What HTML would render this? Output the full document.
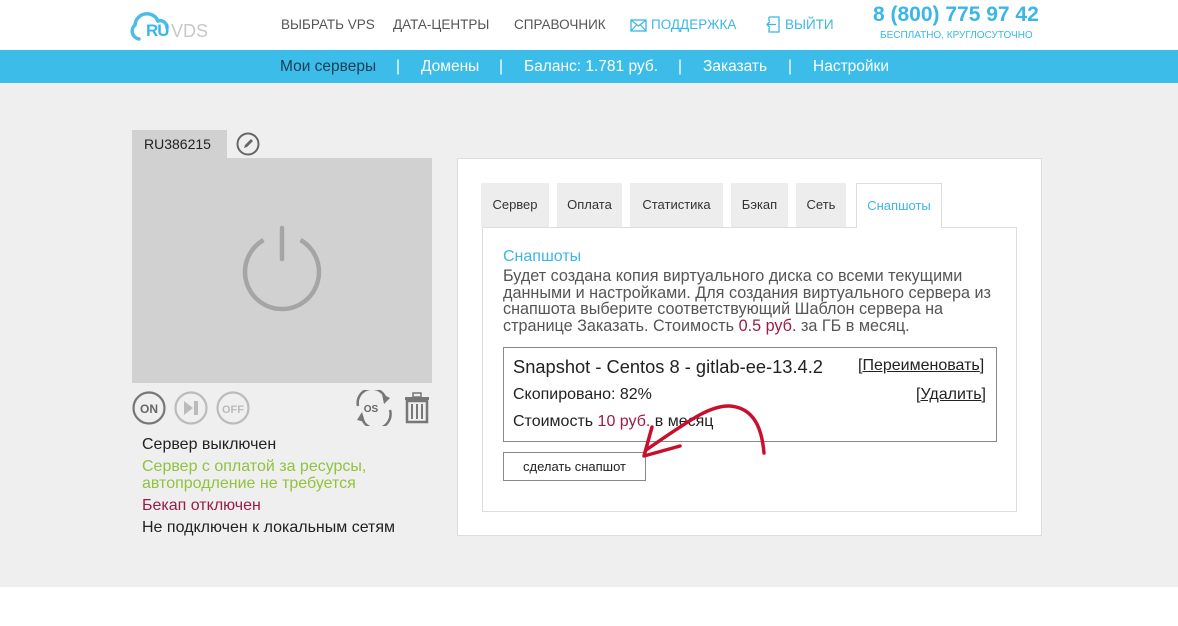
<!DOCTYPE html>
<html><head><meta charset="utf-8"><style>
*{margin:0;padding:0;box-sizing:border-box}
body{width:1178px;height:626px;background:#fff;font-family:"Liberation Sans",sans-serif;position:relative;overflow:hidden}
.a{position:absolute}
.hdr{top:0;left:0;width:1178px;height:50px;background:#fff}
.nav{font-size:13.5px;color:#555;top:17px}
.blue{color:#3ab7e6}
.bar{top:50px;left:0;width:1178px;height:33px;background:#3cbde9;box-shadow:0 2px 3px rgba(0,0,0,.2)}
.bar span{position:absolute;top:8px;font-size:15.5px;color:#fff}
.gray{top:83px;left:0;width:1178px;height:504px;background:#efefef}
.t{font-size:16px;color:#222}
.tab{top:183px;height:44px;background:#ededed;font-size:13px;color:#333;text-align:center;line-height:44px}
</style></head><body>
<div class="a hdr"></div>
<svg class="a" style="left:129px;top:9px" width="44" height="34" viewBox="0 0 44 34"><path d="M10 30 A8 8 0 0 1 6 16 A12 12 0 0 1 29 12 A7 7 0 0 1 38 19" fill="none" stroke="#4cbde6" stroke-width="3.5" stroke-linecap="round"/></svg>
<div class="a" style="left:146px;top:21px;font-size:17px;font-weight:bold;color:#3ab7e6;letter-spacing:-1px">RU</div>
<div class="a" style="left:171px;top:21px;font-size:18px;color:#c8c8c8">VDS</div>
<div class="a nav" style="left:281px">ВЫБРАТЬ VPS</div>
<div class="a nav" style="left:393px">ДАТА-ЦЕНТРЫ</div>
<div class="a nav" style="left:514px">СПРАВОЧНИК</div>
<svg class="a" style="left:630px;top:19px" width="17" height="13"><rect x="1" y="1" width="15" height="11" fill="none" stroke="#3ab7e6" stroke-width="1.3"/><path d="M1 1 L8.5 7 L16 1 M1 12 L6.5 6 M16 12 L10.5 6" fill="none" stroke="#3ab7e6" stroke-width="1.2"/></svg>
<div class="a nav blue" style="left:651px">ПОДДЕРЖКА</div>
<svg class="a" style="left:764px;top:16px" width="16" height="17"><path d="M5 1 H15 V16 H5 V12 M5 5 V1" fill="none" stroke="#3ab7e6" stroke-width="1.3"/><path d="M12 8.5 H3 M6 5.5 L3 8.5 L6 11.5" fill="none" stroke="#3ab7e6" stroke-width="1.3"/></svg>
<div class="a nav blue" style="left:785px">ВЫЙТИ</div>
<div class="a blue" style="left:873px;top:3px;font-size:21px;font-weight:bold">8 (800) 775 97 42</div>
<div class="a blue" style="left:880px;top:30px;font-size:10px">БЕСПЛАТНО, КРУГЛОСУТОЧНО</div>
<div class="a bar"><span style="left:280px;color:#1d3d55">Мои серверы</span><span style="left:396px">|</span><span style="left:421px">Домены</span><span style="left:499px">|</span><span style="left:524px">Баланс: 1.781 руб.</span><span style="left:678px">|</span><span style="left:703px">Заказать</span><span style="left:788px">|</span><span style="left:813px">Настройки</span></div>
<div class="a" style="left:322px;top:83px;width:0;height:0;border-left:6px solid transparent;border-right:6px solid transparent;border-top:6px solid #3cbde9"></div>
<div class="a gray"></div>
<div class="a" style="left:132px;top:130px;width:95px;height:28px;background:#d1d1d1;font-size:14px;color:#222;padding:6px 0 0 12px">RU386215</div>
<svg class="a" style="left:236px;top:132px" width="24" height="24"><circle cx="12" cy="12" r="10.5" fill="none" stroke="#666" stroke-width="2"/><path d="M8 16 L9 13 L15 7 L17 9 L11 15 Z" fill="#666"/></svg>
<div class="a" style="left:132px;top:158px;width:300px;height:225px;background:#d1d1d1"></div>
<svg class="a" style="left:240px;top:224px" width="84" height="92"><path d="M23.5 16 A37 37 0 1 0 60.5 16" fill="none" stroke="#a5a5a5" stroke-width="4.5"/><line x1="42" y1="4" x2="42" y2="35" stroke="#a5a5a5" stroke-width="4.5" stroke-linecap="round"/></svg>
<svg class="a" style="left:132px;top:390px" width="300" height="36">
<circle cx="17" cy="18" r="15.5" fill="none" stroke="#777" stroke-width="2.2"/><text x="17" y="23" font-size="12" font-weight="bold" fill="#666" text-anchor="middle" font-family="Liberation Sans">ON</text>
<circle cx="59" cy="18" r="15.5" fill="none" stroke="#bbb" stroke-width="2.2"/><path d="M52 11 L61 18 L52 25Z" fill="#bbb"/><rect x="62" y="11" width="4" height="14" fill="#bbb"/>
<circle cx="101" cy="18" r="15.5" fill="none" stroke="#bbb" stroke-width="2.2"/><text x="101" y="23" font-size="11" font-weight="bold" fill="#bbb" text-anchor="middle" font-family="Liberation Sans">OFF</text>
<path d="M226 16 A14 14 0 0 1 254 10 M258 20 A14 14 0 0 1 230 28" fill="none" stroke="#777" stroke-width="2.5"/><path d="M250 4 L258 8 L252 14Z M233 32 L225 30 L230 22Z" fill="#777"/><text x="239" y="22" font-size="10" font-weight="bold" fill="#666" text-anchor="middle" font-family="Liberation Sans">OS</text>
<rect x="273" y="7" width="24" height="3" fill="#777"/><rect x="281" y="3" width="8" height="4" fill="none" stroke="#777" stroke-width="1.5"/><path d="M275 11 H295 V32 H275Z" fill="none" stroke="#777" stroke-width="2.5"/><path d="M280 14 V29 M285 14 V29 M290 14 V29" stroke="#777" stroke-width="2"/>
</svg>
<div class="a t" style="left:142px;top:436px">Сервер выключен</div>
<div class="a t" style="left:142px;top:458px;color:#8ec43e;line-height:17px">Сервер с оплатой за ресурсы,<br>автопродление не требуется</div>
<div class="a t" style="left:142px;top:497px;color:#9b1b47">Бекап отключен</div>
<div class="a t" style="left:142px;top:519px">Не подключен к локальным сетям</div>
<div class="a" style="left:457px;top:158px;width:585px;height:378px;background:#fff;border:1px solid #ddd"></div>
<div class="a tab" style="left:481px;width:68px">Сервер</div>
<div class="a tab" style="left:557px;width:65px">Оплата</div>
<div class="a tab" style="left:630px;width:93px">Статистика</div>
<div class="a tab" style="left:731px;width:57px">Бэкап</div>
<div class="a tab" style="left:796px;width:50px">Сеть</div>
<div class="a" style="left:482px;top:227px;width:535px;height:285px;border:1px solid #ddd;background:#fff"></div>
<div class="a tab" style="left:856px;width:86px;height:45px;background:#fff;border:1px solid #ddd;border-bottom:none;color:#3ab7e6">Снапшоты</div>
<div class="a" style="left:503px;top:248px;font-size:16px;color:#3ab7e6">Снапшоты</div>
<div class="a" style="left:503px;top:268px;font-size:16.2px;color:#555;line-height:16.7px;width:495px">Будет создана копия виртуального диска со всеми текущими данными и настройками. Для создания виртуального сервера из снапшота выберите соответствующий Шаблон сервера на странице Заказать. Стоимость <span style="color:#9b1b47">0.5 руб.</span> за ГБ в месяц.</div>
<div class="a" style="left:503px;top:347px;width:494px;height:95px;border:1px solid #888"></div>
<div class="a" style="left:513px;top:356px;font-size:18.3px;color:#222">Snapshot - Centos 8 - gitlab-ee-13.4.2</div>
<div class="a" style="left:858px;top:357px;font-size:16px;color:#222">[<u>Переименовать</u>]</div>
<div class="a" style="left:513px;top:386px;font-size:16px;color:#222">Скопировано: 82%</div>
<div class="a" style="left:916px;top:386px;font-size:16px;color:#222">[<u>Удалить</u>]</div>
<div class="a" style="left:513px;top:413px;font-size:16px;color:#222">Стоимость <span style="color:#9b1b47">10 руб.</span> в месяц</div>
<div class="a" style="left:503px;top:452px;width:143px;height:29px;border:1px solid #888;background:#fff;font-size:13px;color:#222;text-align:center;line-height:27px">сделать снапшот</div>
<svg class="a" style="left:630px;top:400px" width="150" height="70"><path d="M134 53 C132 30 125 8 100 6 C80 5 60 20 16 50" fill="none" stroke="#c8102e" stroke-width="3.5" stroke-linecap="round"/><path d="M22 27 L14 56 L50 46" fill="none" stroke="#c8102e" stroke-width="3.5" stroke-linecap="round" stroke-linejoin="round"/></svg>
</body></html>
